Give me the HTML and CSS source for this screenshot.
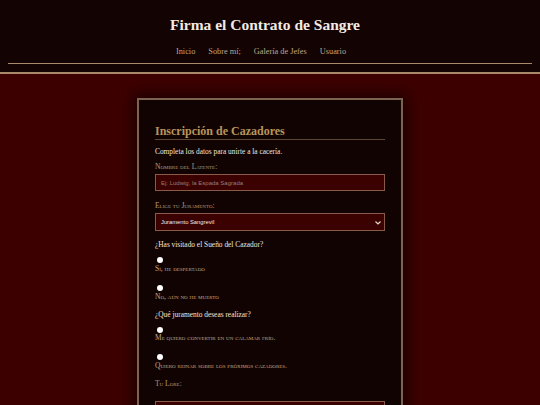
FILE: index.html
```html
<!DOCTYPE html>
<html>
<head>
	<title>Contrato de Sangre</title>
	<meta charset="utf-8" />
	<link rel="stylesheet" href="styles.css">
</head>
<body>
	<div class="top">
		<h1 class="title">Firma el Contrato de Sangre</h1>
		<ul class="menu">
			<li>Inicio</li>
			<li>Sobre mí;</li>
			<li>Galería de Jefes</li>
			<li>Usuario</li>
		</ul>
	</div>

	<form class="contrato">
		<h2>Inscripción de Cazadores</h2>
		<p class="intro">Completa los datos para unirte a la cacería.</p>

		<label class="campo" for="nombre">Nombre del Latente:</label>
		<input type="text" id="nombre" class="caja" placeholder="Ej: Ludwig, la Espada Sagrada">

		<label class="campo sep" for="jur">Elige tu Juramento:</label>
		<div class="caja selector">
			<select id="jur">
				<option>Juramento Sangrevil</option>
			</select>
			<svg class="flecha" width="6" height="4" viewBox="0 0 6 4"><path d="M0.5 0.5 L3 3 L5.5 0.5" stroke="#e8d8c8" stroke-width="1.2" fill="none"/></svg>
		</div>

		<p class="pregunta">¿Has visitado el Sueño del Cazador?</p>
		<input type="radio" name="sueno" class="bola">
		<label class="opcion">Sí, he despertado</label>
		<input type="radio" name="sueno" class="bola lejos">
		<label class="opcion">No, aún no he muerto</label>

		<p class="pregunta dos">¿Qué juramento deseas realizar?</p>
		<input type="radio" name="voto" class="bola">
		<label class="opcion pegada">Me quiero convertir en un calamar frío.</label>
		<input type="radio" name="voto" class="bola lejos">
		<label class="opcion">Quiero reinar sobre los próximos cazadores.</label>

		<label class="campo lore" for="lore">Tu Lore:</label>
		<textarea id="lore" class="caja texto"></textarea>
	</form>
</body>
</html>
```
FILE: styles.css
```css
*{
	padding: 0px;
	margin: 0px;
	box-sizing: border-box;
}
body{
	background: #3d0000;
	font-family: "Liberation Serif", Georgia, serif;
	height: 405px;
	overflow: hidden;
}
/* cabecera */
.top{
	background: #130303;
	border-bottom: 2px solid #a88a6a;
	padding: 15px 8px 0;
	height: 74px;
}
.title{
	color: #f2ebe4;
	font-size: 15.5px;
	line-height: 20px;
	text-align: center;
	font-weight: bold;
	padding-right: 10px;
}
.menu{
	list-style: none;
	display: flex;
	justify-content: center;
	gap: 13px;
	margin-top: 11px;
	padding: 0 18px 5px 0;
	border-bottom: 1px solid #a88a6a;
}
.menu li{
	color: #bfa88a;
	font-size: 8.3px;
	line-height: 12px;
}
/* formulario */
.contrato{
	width: 266px;
	margin: 24px auto 0;
	background: #120303;
	border: 2px solid #7d6450;
	box-shadow: 0 0 14px 4px rgba(0,0,0,0.55);
	padding: 23px 16px 0;
	height: 340px;
}
.contrato h2{
	color: #b8955c;
	font-size: 12px;
	line-height: 16px;
	border-bottom: 1px solid #5e4636;
	padding-bottom: 0;
}
.intro, .pregunta{
	color: #eee6dd;
	font-size: 7.4px;
	line-height: 12px;
	margin-top: 6px;
}
.campo, .opcion{
	display: block;
	color: #b89a74;
	font-variant: small-caps;
	font-size: 7.5px;
	line-height: 10px;
	margin-top: 4px;
}
.opcion{
	color: #c2a886;
	margin-top: 1px;
}
.opcion.pegada{
	margin-top: 0;
}
.sep{
	margin-top: 10px;
}
.lore{
	margin-top: 8px;
}
.caja{
	display: block;
	width: 100%;
	height: 17px;
	margin-top: 2px;
	background: #3b0000;
	border: 1px solid #8a5a48;
	color: #f0e6e0;
	font-family: "Liberation Sans", Arial, sans-serif;
	font-size: 6px;
	padding: 0 5px;
	outline: none;
}
.caja::placeholder{
	color: #9a7f78;
}
.selector{
	position: relative;
	height: 18px;
	padding: 0;
}
.selector select{
	appearance: none;
	background: transparent;
	border: none;
	color: #f4ece6;
	font-family: "Liberation Sans", Arial, sans-serif;
	font-size: 5.8px;
	width: 100%;
	height: 100%;
	padding: 0 5px;
	outline: none;
}
.flecha{
	position: absolute;
	right: 3px;
	top: 7px;
}
.pregunta{
	margin-top: 8px;
}
.pregunta.dos{
	margin-top: 7px;
}
.bola{
	appearance: none;
	display: block;
	width: 6px;
	height: 6px;
	border-radius: 50%;
	background: #fff;
	margin: 6px 0 0 2px;
}
.bola.lejos{
	margin-top: 11px;
}
.texto{
	margin-top: 12px;
	height: 40px;
	resize: none;
}
```
